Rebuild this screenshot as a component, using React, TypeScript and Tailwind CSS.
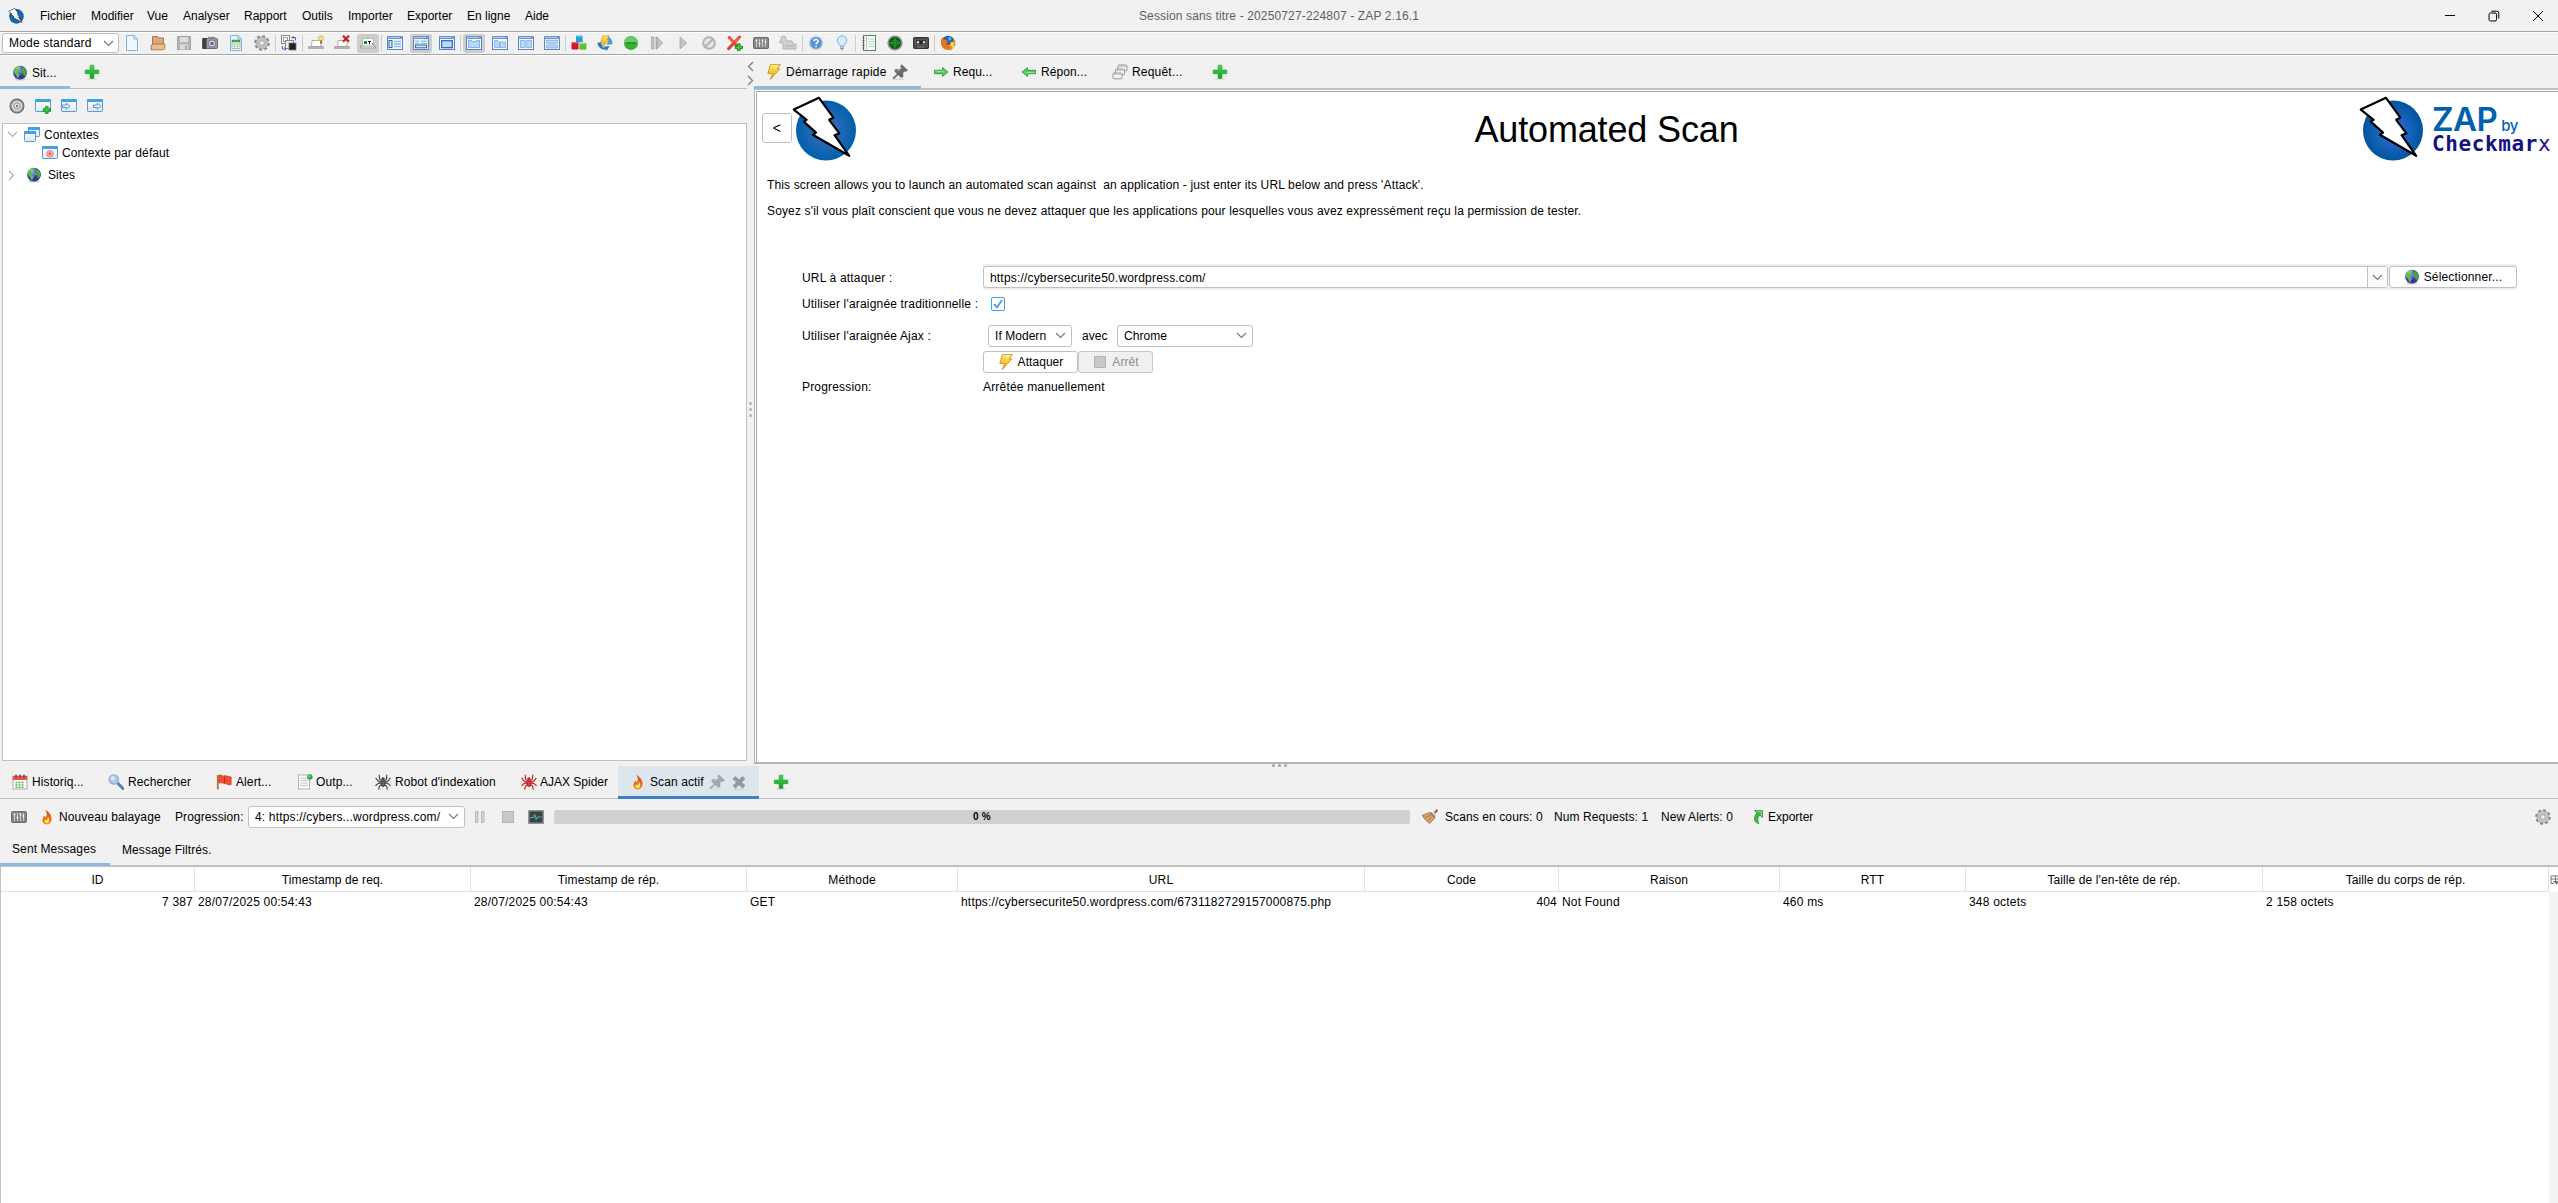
import React from 'react';

type IconProps = { className?: string };
type Kids = { children?: React.ReactNode; className?: string };

function Ico({ children, className = '' }: Kids) {
  return (
    <svg viewBox="0 0 16 16" className={`h-4 w-4 shrink-0 ${className}`} fill="none">
      {children}
    </svg>
  );
}

const Defs = () => (
  <svg className="absolute h-0 w-0" aria-hidden="true">
    <defs>
      <radialGradient id="ball">
        <stop offset="0" stopColor="#4171bb" />
        <stop offset="1" stopColor="#0060ad" />
      </radialGradient>
      <radialGradient id="ball2">
        <stop offset="0" stopColor="#3472e0" />
        <stop offset="1" stopColor="#00559e" />
      </radialGradient>
      <linearGradient id="bolt" x1="0" y1="0" x2="0" y2="1">
        <stop offset="0" stopColor="#ffe96b" />
        <stop offset="1" stopColor="#f0a202" />
      </linearGradient>
      <linearGradient id="win" x1="0" y1="0" x2="0" y2="1">
        <stop offset="0" stopColor="#ffffff" />
        <stop offset="1" stopColor="#dfe7f2" />
      </linearGradient>
      <radialGradient id="globe" cx="0.35" cy="0.3">
        <stop offset="0" stopColor="#a9adf5" />
        <stop offset="1" stopColor="#34349c" />
      </radialGradient>
      <linearGradient id="plus" x1="0" y1="0" x2="0" y2="1">
        <stop offset="0" stopColor="#4fd34f" />
        <stop offset="1" stopColor="#0f9d28" />
      </linearGradient>
      <linearGradient id="flame" x1="0" y1="0" x2="0" y2="1">
        <stop offset="0" stopColor="#d9401a" />
        <stop offset="1" stopColor="#f88a1c" />
      </linearGradient>
    </defs>
  </svg>
);

const ZapLogo = ({ className = '', fill = 'url(#ball)' }: IconProps & { fill?: string }) => (
  <svg viewBox="0 0 64 66" className={`shrink-0 ${className}`}>
    <circle cx="34" cy="34.5" r="30" fill={fill} />
    <path
      d="M27 1.8 L1.8 13.6 L14.6 23.8 L11.8 25.6 L24 36.6 L20.8 38.8 L57.2 59.8 L42.6 39.2 L47.4 37.4 L37.2 23.8 L41.4 21.6 Z"
      fill="#fff"
      stroke="#000"
      strokeWidth="2.2"
      strokeLinejoin="round"
    />
  </svg>
);

const Globe = ({ className = '' }: IconProps) => (
  <Ico className={className}>
    <ellipse cx="8" cy="14.4" rx="5.5" ry="1.1" fill="#c9c9cf" />
    <circle cx="8" cy="7.7" r="6.9" fill="url(#globe)" />
    <path d="M2 4.5C4 1.5 7 .9 9 1.6L7.6 3.7 6 4.2 6.6 6 4.6 7.2 7.6 9.6 6.2 13.6C4.4 12.4 4.6 10 3.2 8.6 1.6 7.6 1.4 6 2 4.5Z" fill="#5cc443" />
    <path d="M9.6 2.6L12.4 3 14.4 6.2 14.2 9.8 12 11.4 11 8.6 9.2 7.6 9.8 5.2Z" fill="#45ab38" />
    <path d="M3.4 4C5 2.2 6.4 2 7.6 2.2L6 3.6Z" fill="#a5e38a" />
  </Ico>
);

const Plus = ({ className = '' }: IconProps) => (
  <Ico className={className}>
    <ellipse cx="8" cy="14.8" rx="5" ry=".9" fill="#d2d2d2" />
    <path d="M6.1 1.2h3.8v4.9h4.9v3.6H9.9v4.6H6.1V9.7H1.2V6.1h4.9Z" fill="url(#plus)" stroke="#18a32e" strokeWidth=".6" />
  </Ico>
);

const Bolt = ({ className = '' }: IconProps) => (
  <Ico className={className}>
    <path d="M4.4 .6h10L11.2 5h2.6L4.200 15.600 6.800 9.600H1.800Z" fill="url(#bolt)" stroke="#c8890e" strokeWidth=".8" strokeLinejoin="round" />
    <path d="M5.2 1.6h6L8.4 5.2" stroke="#fff8c0" strokeWidth=".7" />
  </Ico>
);

const Pin = ({ className = '' }: IconProps) => (
  <Ico className={className}>
    <path d="M6.4 9.6L1 14.8" stroke="#777" strokeWidth="2" />
    <path d="M9.6 .8L15.6 6.2 13.8 7.4 12.2 7.2 10.8 8.8 11 12.8 9 13.4 2.600 7.200 3.600 5.400 7.600 5.600 9.200 4 8.800 2.200Z" fill="#6c6c6c" stroke="#5a5a5a" strokeWidth=".6" />
    <path d="M5.4 7L9.6 3.8" stroke="#b5b5b5" strokeWidth="1.200" />
    <path d="M2 15.2h10" stroke="#cacaca" strokeWidth="1" />
  </Ico>
);

const Arrow = ({ left }: { left?: boolean }) => (
  <Ico className={left ? 'rotate-180' : ''}>
    <path d="M1.5 6.3H9.6V3.6L14.8 8 9.6 12.4V9.7H1.5Z" fill="#5dcb63" stroke="#1f9630" strokeWidth=".9" strokeLinejoin="round" />
    <path d="M2.2 7.3h8.4" stroke="#a5eca2" strokeWidth=".9" />
  </Ico>
);

const Stack = () => (
  <Ico>
    {[[6, 1], [3.5, 5], [1, 9]].map(([x, y]) => (
      <g key={x}>
        <rect x={x} y={y} width="9" height="5.8" rx="1" fill="#f2f2f2" stroke="#8f8f8f" strokeWidth=".9" />
        <path d={`M${x} ${y + 1.1}h9`} stroke="#b9b9b9" strokeWidth="1.2" />
      </g>
    ))}
  </Ico>
);

const Chev = ({ className = '' }: IconProps) => (
  <svg viewBox="0 0 11 7" className={`h-[7px] w-[11px] shrink-0 ${className}`} fill="none">
    <path d="M1 1L5.5 5.5 10 1" stroke="#7a7a7a" strokeWidth="1.2" />
  </svg>
);

/* Window-shaped icon with a blue title strip. */
const Win = ({ children, x = 0, y = 2, w = 16, h = 13 }: { children?: React.ReactNode; x?: number; y?: number; w?: number; h?: number }) => (
  <>
    <rect x={x + 0.5} y={y + 0.5} width={w - 1} height={h - 1} rx=".8" fill="url(#win)" stroke="#5a9bd3" />
    <rect x={x} y={y} width={w} height="3" rx=".8" fill="#3fa2e6" />
    {children}
  </>
);

/* Layout-selector icon frame. */
const Lay = ({ children }: Kids) => (
  <Ico>
    <rect x=".5" y="1.5" width="15" height="13" fill="#f4f8fe" stroke="#5b82be" />
    <rect x="0" y="1" width="16" height="3" fill="#6f95d0" />
    <rect x="1" y="2" width="12" height=".9" fill="#b4cdf0" />
    {children}
  </Ico>
);

const Gear = ({ className = '' }: IconProps) => (
  <Ico className={className}>
    <circle cx="8" cy="8" r="6.6" stroke="#868686" strokeWidth="2.4" strokeDasharray="2.9 2.28" />
    <circle cx="8" cy="8" r="4.4" fill="none" stroke="#c2c2c2" strokeWidth="3.2" />
    <circle cx="8" cy="8" r="6" stroke="#969696" strokeWidth=".6" />
    <circle cx="8" cy="8" r="2.4" fill="#f4f4f4" stroke="#888" strokeWidth=".8" />
  </Ico>
);

const Doc = ({ children }: Kids) => (
  <>
    <path d="M2.5.5H10L13.5 4V15.5H2.5Z" fill="#eef6fe" stroke="#7fb2de" />
    <path d="M10 .5V4h3.5" fill="#cfe4f8" stroke="#7fb2de" />
    {children}
  </>
);

const Mixer = () => (
  <Ico>
    <rect x=".5" y="2.5" width="15" height="11" rx="1" fill="#858585" stroke="#6c6c6c" />
    <path d="M3.5 4v8M6.5 4v8M9.5 4v8M12.5 4v8" stroke="#d5d5d5" strokeWidth=".9" />
    <path d="M2.7 5.500h1.600M5.700 8.500h1.600M8.700 5.500h1.600M11.700 7h1.600" stroke="#fff" strokeWidth="1.4" />
  </Ico>
);

const Stop = () => (
  <Ico>
    <rect x="2.5" y="2.5" width="11" height="11" fill="#c9c9c9" stroke="#b4b4b4" />
  </Ico>
);

const Flame = ({ className = '' }: IconProps) => (
  <Ico className={className}>
    <path d="M6 .6C10 3 12.8 6.4 12.6 10.2 12.4 13.4 10.4 15.4 7.8 15.4 5 15.4 3.2 13.4 3.4 10.8 3.6 9 4.8 8.4 5 6.8 6 7.2 6.4 8 6.4 8.8 8.6 6.4 8 3 6 .6Z" fill="url(#flame)" />
    <path d="M8.8 7.6C10.4 9.2 10.6 12 9.6 13.4 8.6 14.6 6.6 14.4 5.8 13.2 5.2 12 5.6 11 6 10.4 6.4 11.2 7 11.4 7.6 11 8.6 10 8.9 8.8 8.8 7.6Z" fill="#ffe75a" />
  </Ico>
);

const Spider = ({ c }: { c: string }) => (
  <Ico>
    <ellipse cx="8" cy="9.6" rx="2.4" ry="3.4" fill={c} />
    <circle cx="8" cy="5" r="1.8" fill={c} />
    <path d="M7 7L4.6 5.4 4.2 .8M9 7L11.4 5.4 11.8 .8M6.4 8L3.4 7.4 .6 3.800M9.6 8L12.6 7.4 15.400 3.800M6.2 9.2L3.4 9.4 .4 11.8M9.8 9.2L12.6 9.4 15.6 11.8M6.6 10.6L4.4 12 3.600 15.600M9.4 10.6L11.6 12 12.400 15.600" stroke={c} strokeWidth="1.2" />
    <path d="M7.2 9h1.6M7.2 11h1.6" stroke="#fff" strokeWidth=".5" opacity=".6" />
  </Ico>
);

const Laptop = ({ children }: Kids) => (
  <Ico>
    <path d="M4 5.5h9v6H3.5Z" fill="#fdfdfd" stroke="#9c9c9c" strokeWidth=".8" />
    <path d="M.6 11.6h14.8v1.8H.6Z" fill="#bdbdbd" stroke="#8a8a8a" strokeWidth=".6" />
    {children}
  </Ico>
);

const Cell = ({ children, on, className = 'w-[26px]' }: Kids & { on?: boolean }) => (
  <div className={`flex shrink-0 justify-center ${className}`}>
    <div className={`flex h-[19px] w-[22px] items-center justify-center rounded-[3px] ${on ? 'bg-[#cdcdcd]' : ''}`}>{children}</div>
  </div>
);
const Sep = () => <div className="h-[17px] w-px shrink-0 bg-[#cdcdcd]" />;

const TitleBar = () => (
  <div className="relative flex h-[31px] items-center">
    <div className="w-[40px] pl-2">
      <ZapLogo className="h-4 w-4" />
    </div>
    <div className="flex tracking-normal">
      <div className="w-[51px]">Fichier</div>
      <div className="w-[56px]">Modifier</div>
      <div className="w-[36px]">Vue</div>
      <div className="w-[61px]">Analyser</div>
      <div className="w-[58px]">Rapport</div>
      <div className="w-[46px]">Outils</div>
      <div className="w-[59px]">Importer</div>
      <div className="w-[60px]">Exporter</div>
      <div className="w-[58px]">En ligne</div>
      <div>Aide</div>
    </div>
    <div className="pointer-events-none absolute inset-0 flex items-center justify-center text-[#5f5f5f]">
      <span className="tracking-[0.14px]">Session sans titre - 20250727-224807 - ZAP 2.16.1</span>
    </div>
    <div className="ml-auto flex items-center pr-[14px]">
      <svg viewBox="0 0 12 12" className="mr-[32px] h-3 w-3"><path d="M1 5.5h10" stroke="#000" /></svg>
      <svg viewBox="0 0 12 12" className="mr-[32px] h-3 w-3" fill="none">
        <rect x="1" y="3" width="7.6" height="8" rx="1.6" stroke="#000" />
        <path d="M3.4 1.2H8.6A2.2 2.2 0 0 1 10.8 3.4V8.6" stroke="#000" />
      </svg>
      <svg viewBox="0 0 12 12" className="h-3 w-3"><path d="M1 1l10 10M11 1L1 11" stroke="#000" /></svg>
    </div>
  </div>
);

const Toolbar = () => (
  <div className="flex h-[24px] items-center border-y border-t-[#a5a5a5] border-b-[#a5a5a5] pl-[2px] shadow-[inset_0_1px_0_#fff]">
    <div className="flex h-[20px] w-[117px] items-center justify-between rounded-[3px] border border-[#bdbdbd] bg-white pr-1 pl-[6px]">
      <span className="tracking-[0.2px]">Mode standard</span>
      <Chev />
    </div>
    <Cell><Ico><Doc /></Ico></Cell>
    <Cell>
      <Ico>
        <path d="M2.5 1.5h5l1 1.5h5v10h-11Z" fill="#d9a878" stroke="#a9774a" />
        <path d="M1 10.5L3 9H14.8V13.6L13.6 14.8H1Z" fill="#e9bd90" stroke="#a9774a" strokeWidth=".9" />
      </Ico>
    </Cell>
    <Cell>
      <Ico>
        <path d="M1.5 1.5h13v13h-13Z" fill="#b5b5b5" stroke="#a2a2a2" />
        <rect x="4" y="2" width="8" height="5" fill="#dedede" />
        <rect x="4" y="9.5" width="8" height="5" fill="#dedede" />
        <rect x="9" y="10.5" width="2" height="4" fill="#a9a9a9" />
      </Ico>
    </Cell>
    <Cell>
      <Ico>
        <rect x=".5" y="3.5" width="15" height="10" rx="1" fill="#9b9b9b" stroke="#6c6c6c" />
        <rect x=".5" y="3" width="4" height="11" fill="#3e3e3e" />
        <rect x="6" y="1.8" width="7" height="2" fill="#8b8b8b" />
        <circle cx="10" cy="8.5" r="3.6" fill="#dcdce6" stroke="#5e5e6e" strokeWidth=".8" />
        <circle cx="10" cy="8.5" r="1.8" fill="#5a5f9d" />
      </Ico>
    </Cell>
    <Cell>
      <Ico>
        <Doc>
          <rect x="4" y="5" width="8" height="8.5" fill="#fff" stroke="#7d9a7d" strokeWidth=".6" />
          <rect x="4" y="5" width="8" height="2.2" fill="#2fa33b" />
          <path d="M4 9h8M4 11.2h8M6.7 5v8.5M9.4 5v8.5" stroke="#8db48d" strokeWidth=".6" />
        </Doc>
      </Ico>
    </Cell>
    <Cell><Gear /></Cell>
    <Sep />
    <Cell>
      <Ico>
        <rect x=".5" y=".5" width="8" height="8" fill="#fff" stroke="#8a8a8a" />
        <rect x="2.5" y="2.5" width="4" height="4" stroke="#8a8a8a" strokeWidth=".8" />
        <rect x="4.5" y="5.5" width="8" height="8" fill="#eee" stroke="#8a8a8a" />
        <rect x="8" y="8" width="7" height="7" fill="#222" stroke="#777" strokeWidth=".8" />
        <path d="M11 2.5h3.5V5.5M11 2.5l1.5-1.5M11 2.5L12.5 4M5 14H1.4V11M5 14l-1.5-1.5M5 14l-1.5 1.5" stroke="#2f55c8" strokeWidth=".9" />
      </Ico>
    </Cell>
    <Sep />
    <Cell>
      <Laptop>
        <circle cx="13" cy="3.4" r="2.6" fill="#f6e07a" stroke="#bfa33e" strokeWidth=".6" />
        <rect x="12" y="5.6" width="2" height="3" fill="#8a7b4a" />
      </Laptop>
    </Cell>
    <Cell>
      <Laptop>
        <path d="M9 .8l6 6M15 .8l-6 6" stroke="#cc1f1f" strokeWidth="2.2" />
      </Laptop>
    </Cell>
    <Cell on>
      <Ico>
        <path d="M2.5 3.5h11v8h-11Z" fill="#fff" stroke="#a9a9a9" strokeWidth=".8" />
        <path d="M.6 11h14.8v2H.6Z" fill="#e9e9e9" stroke="#7d7d7d" strokeWidth=".6" />
        <rect x="4" y="6" width="3" height="3" fill="#07931c" />
        <path d="M8 6.5h3M9.5 6.5V9.4M12 9h1" stroke="#111" strokeWidth="1" />
      </Ico>
    </Cell>
    <Sep />
    <Cell>
      <Lay>
        <rect x="2" y="5.5" width="3" height="7" fill="#d4e6fb" stroke="#2d64b0" />
        <path d="M7 6.5h7M7 9h7M7 11.5h7" stroke="#8db8e8" strokeWidth="1.4" />
      </Lay>
    </Cell>
    <Cell on>
      <Lay>
        <path d="M2 6.2h4M7.5 6.2h6.5M2 8.4h4M7.5 8.4h6.5" stroke="#8db8e8" strokeWidth="1.3" />
        <rect x="2.5" y="10" width="11" height="2.8" fill="#d4e6fb" stroke="#2d64b0" />
      </Lay>
    </Cell>
    <Cell>
      <Lay><rect x="2.7" y="5.7" width="10.6" height="7" fill="#bedaf8" stroke="#2d64b0" strokeWidth="1.2" /></Lay>
    </Cell>
    <Sep />
    <Cell on>
      <Lay><path d="M2.5 12.5v-7h3v1h5v-1h3v7Z" fill="#bcd8f7" stroke="#7fb0e6" /></Lay>
    </Cell>
    <Cell>
      <Lay><path d="M2.5 12.5v-7h3v1.5h2v5.5Z M8 12.5v-5.5h5.5v5.5Z" fill="#bcd8f7" stroke="#7fb0e6" strokeWidth=".9" /></Lay>
    </Cell>
    <Cell>
      <Lay><path d="M2.5 5.5h4.7v7H2.5Z M8.8 5.5h4.7v7H8.8Z" fill="#bcd8f7" stroke="#7fb0e6" strokeWidth=".9" /></Lay>
    </Cell>
    <Cell>
      <Lay><path d="M2.5 5.3h11v2.9h-11Z M2.5 10h11v2.9h-11Z" fill="#bcd8f7" stroke="#7fb0e6" strokeWidth=".9" /></Lay>
    </Cell>
    <Sep />
    <Cell>
      <Ico>
        <rect x="5" y=".6" width="6.6" height="6.6" rx=".8" fill="#22a0dc" />
        <rect x=".5" y="7" width="7" height="7.6" rx=".8" fill="#d4152a" />
        <rect x="8.4" y="7.8" width="7" height="7" rx=".8" fill="#5cc234" />
        <path d="M5.5 1.2h5.4M1 7.8h5.8M9 8.5h5.8" stroke="#fff" strokeWidth=".9" opacity=".5" />
      </Ico>
    </Cell>
    <Cell>
      <Ico>
        <path d="M.6 7.500c0 4.500 3.600 7.400 8 7l1 1.300 3-4.600-5.800.4 1 1.200C6 12.600 4.400 11 4.400 7.500Z" fill="#1f78c4" />
        <path d="M15.600 9c0-4-2.200-7.400-6.600-8L11 6l-1 4Z" fill="#4b9cdc" />
        <path d="M6 .8h6L10 4.8h2.6L4.8 12.6 6.6 7.6H3.4Z" fill="url(#bolt)" stroke="#c8890e" strokeWidth=".6" />
      </Ico>
    </Cell>
    <Cell>
      <Ico>
        <circle cx="8" cy="8" r="7" fill="#35b234" />
        <path d="M1.5 7.6a6.5 6.3 0 0 1 13 0Z" fill="#6ccb66" />
        <path d="M3 8h10" stroke="#22862a" strokeWidth="1.4" />
      </Ico>
    </Cell>
    <Cell>
      <Ico><path d="M2.500 2h2.400v12H2.500ZM7 2h1v12H7ZM8 2l5.600 6L8 14Z" fill="#c4c4c4" stroke="#a6a6a6" strokeWidth=".8" /></Ico>
    </Cell>
    <Cell><Ico><path d="M5 2l6.8 6L5 14Z" fill="#c4c4c4" stroke="#a6a6a6" strokeWidth=".8" /></Ico></Cell>
    <Cell>
      <Ico><circle cx="8" cy="8" r="5.8" stroke="#b2b2b2" strokeWidth="2" fill="#e6e6e6" /><path d="M4 12L12 4" stroke="#b2b2b2" strokeWidth="2" /></Ico>
    </Cell>
    <Cell>
      <Ico>
        <path d="M2.200 2.600l10 11M12.600 2l-11 11.600" stroke="#e0432f" strokeWidth="3" strokeLinecap="round" />
        <path d="M2.400 2.800l4 4.400M12.400 2.200l-4.400 4.700" stroke="#f79080" strokeWidth="1" />
        <path d="M10.500 8.800h2.600v2.400h2.400v2.400h-2.400v2.200h-2.600v-2.200H8.200v-2.400h2.300Z" fill="#3bd23b" stroke="#0a7d16" strokeWidth=".8" />
      </Ico>
    </Cell>
    <Cell><Mixer /></Cell>
    <Cell className="w-[28px]">
      <Ico className="!w-[18px]">
        <path d="M1 6V3.500a2.500 2.500 0 0 1 5 0V6h6l1 3h3v5H3V8H0V6Z" fill="#d0d0d0" stroke="#aeaeae" strokeWidth=".9" />
        <path d="M5 11h9" stroke="#aeaeae" strokeWidth="1" />
      </Ico>
    </Cell>
    <Sep />
    <Cell>
      <Ico>
        <circle cx="8" cy="8" r="6.800" fill="#5a8fd0" stroke="#d4e0ef" />
        <circle cx="8" cy="8" r="6" stroke="#a8c5e8" strokeWidth=".8" />
        <path d="M5.900 6.200C6 4 10.300 4 10.200 6.300 10.200 7.700 8.200 7.700 8.100 9.400M8.100 10.800v1.500" stroke="#fff" strokeWidth="1.500" />
      </Ico>
    </Cell>
    <Cell>
      <Ico>
        <path d="M8 .8a4.600 4.600 0 0 1 2.800 8.300L10 11H6L5.200 9.100A4.600 4.600 0 0 1 8 .8Z" fill="#d6ebff" stroke="#7db4ea" />
        <path d="M6 12h4M6.200 13.500h3.600M7 15h2" stroke="#8f8f8f" strokeWidth="1.100" />
      </Ico>
    </Cell>
    <Sep />
    <Cell>
      <Ico>
        <rect x="2.500" y=".5" width="12" height="15" fill="#f7fcf7" stroke="#5f7d6b" />
        <path d="M5.500 1v14" stroke="#9cb9a8" strokeWidth=".7" />
        <path d="M1.500 3h2M1.500 5.500h2M1.500 8h2M1.500 10.500h2M1.500 13h2" stroke="#555" strokeWidth="1" />
        <path d="M7 4h6M7 6.500h6M7 9h6M7 11.500h6" stroke="#a9d2b2" strokeWidth=".8" />
      </Ico>
    </Cell>
    <Cell>
      <Ico>
        <circle cx="8" cy="8" r="6.800" fill="#0d5c17" stroke="#8d8d8d" strokeWidth="1.600" />
        <path d="M8 2.500v11M2.500 8h11" stroke="#2fae3c" strokeWidth=".9" />
        <circle cx="8" cy="8" r="3" stroke="#2fae3c" strokeWidth=".6" />
      </Ico>
    </Cell>
    <Cell>
      <Ico>
        <rect x=".5" y="2.500" width="15" height="11" rx=".8" fill="#4a4a4a" stroke="#333" />
        <rect x="2.500" y="5" width="11" height="4.600" fill="#222" stroke="#888" strokeWidth=".5" />
        <circle cx="5" cy="7.300" r="1.200" fill="#ddd" /><circle cx="11" cy="7.300" r="1.200" fill="#ddd" />
        <path d="M4 12h8" stroke="#888" strokeWidth=".8" />
      </Ico>
    </Cell>
    <Sep />
    <Cell>
      <Ico>
        <circle cx="8" cy="7.600" r="6.800" fill="#2a62ae" />
        <path d="M8.500 2a4 4 0 0 1 3 2L9 6Z" fill="#7dc2ee" />
        <path d="M1 4.500L2.500 2.500 3 4 6 5 8 7 6 8.500 8.500 10 12 9.500 13.500 5 13 2.500 15.200 6.500C15.600 11 12.500 15 8 15 3.500 15 .4 11.500 1 4.500Z" fill="#e8761a" />
        <path d="M11 7h4l-1.500 3h2L10.500 15.500 12 11.500H9.500Z" fill="#ffd94a" stroke="#c8890e" strokeWidth=".5" />
      </Ico>
    </Cell>
  </div>
);

const SitesPanel = () => (
  <div className="flex w-[747px] shrink-0 flex-col">
    <div className="flex h-[33px] border-b border-[#c0c0c0]">
      <div className="-mb-px flex w-[70px] items-center border-b-[3px] border-[#92b8de] pt-[3px] pl-3">
        <Globe /><span className="ml-1">Sit...</span>
      </div>
      <div className="flex items-center pl-[14px]"><Plus /></div>
    </div>
    <div className="flex h-[34px] items-center gap-[10px] pl-[9px]">
      <Ico>
        <circle cx="8" cy="8" r="6.900" fill="#a9a9a9" stroke="#666" strokeWidth="1.200" />
        <circle cx="8" cy="8" r="4.300" stroke="#eee" strokeWidth="1.100" />
        <circle cx="8" cy="8" r="1.800" stroke="#eee" strokeWidth="1.100" fill="#777" />
      </Ico>
      <Ico><Win y={1}><path d="M10.500 8.500h2.600v2.200h2.400v2.500h-2.400v2.300h-2.600v-2.300H8.200v-2.500h2.300Z" fill="#3bc63b" stroke="#0a8a1e" strokeWidth=".8" /></Win></Ico>
      <Ico><Win y={1}><path d="M1.500 7h3.800V5.200L9 8.200 5.300 11.200V9.500H1.500Z" fill="#f4faff" stroke="#4c93cf" /></Win></Ico>
      <Ico><Win y={1}><path d="M6.500 7h3.800V5.200L14 8.200l-3.700 3V9.500H6.500Z" fill="#f4faff" stroke="#4c93cf" /></Win></Ico>
    </div>
    <div className="ml-[2px] flex-1 border border-[#c0c0c0] bg-white pt-px">
      <div className="flex h-[19px] items-center pl-[4px]">
        <Chev className="opacity-60" />
        <Ico className="ml-[6px]"><Win x={4} y={0} w={12} h={10} /><Win x={0} y={4} w={12} h={11} /></Ico>
        <span className="ml-1">Contextes</span>
      </div>
      <div className="flex h-[17px] items-center pl-[39px]">
        <Ico>
          <Win y={1}><circle cx="8" cy="8.800" r="3.300" fill="#f9b4b0" stroke="#f07874" /><circle cx="8" cy="8.800" r="1.200" fill="#e8504c" /></Win>
        </Ico>
        <span className="ml-1">Contexte par défaut</span>
      </div>
      <div className="flex h-[27px] items-center pt-px pl-[3px]">
        <Chev className="-rotate-90 opacity-60" />
        <Globe className="ml-[9px]" />
        <span className="ml-[6px]">Sites</span>
      </div>
    </div>
  </div>
);

const Splitter = () => (
  <div className="flex w-[7px] shrink-0 flex-col items-center pt-[5px]">
    <Chev className="mt-[2px] rotate-90" />
    <Chev className="mt-[7px] -rotate-90" />
    <div className="mt-[318px] flex flex-col gap-[3px]">
      <i className="block h-[3px] w-[3px] rounded-full bg-[#b0b0b0]" />
      <i className="block h-[3px] w-[3px] rounded-full bg-[#b0b0b0]" />
      <i className="block h-[3px] w-[3px] rounded-full bg-[#b0b0b0]" />
    </div>
  </div>
);

const Combo = ({ children, className = '' }: Kids) => (
  <div className={`flex h-[22px] items-center justify-between rounded-[3px] border border-[#c0c0c0] bg-white pr-[5px] pl-[6px] ${className}`}>
    {children}
    <Chev />
  </div>
);

const QuickStart = () => (
  <div className="flex min-w-0 flex-1 flex-col">
    <div className="flex h-[34px] border-b-2 border-[#c0c0c0]">
      <div className="-mb-px flex w-[167px] items-center border-b-[3px] border-[#92b8de] pt-[2px] pl-3">
        <Bolt /><span className="ml-1 w-[102px] tracking-[0.25px]">Démarrage rapide</span><Pin className="ml-[4px]" />
      </div>
      <div className="flex w-[88px] items-center pl-3"><Arrow /><span className="ml-1">Requ...</span></div>
      <div className="flex w-[91px] items-center pl-3"><Arrow left /><span className="ml-1">Répon...</span></div>
      <div className="flex w-[98px] items-center pl-3"><Stack /><span className="ml-1 tracking-[0.2px]">Requêt...</span></div>
      <div className="flex items-center pl-[14px]"><Plus /></div>
    </div>
    <div className="flex flex-1 flex-col border-b-2 border-l border-[#b4b4b4] bg-white pt-px pl-px">
      <div className="flex flex-1 flex-col border-t border-l border-[#a9a9a9]">
        <div className="relative flex h-[75px] items-center pl-[5px]">
          <div className="-mt-[3px] flex h-[30px] w-[30px] items-center justify-center rounded-[3px] border border-[#c0c0c0] text-[14px]">&lt;</div>
          <ZapLogo className="-mt-[2px] h-[66px] w-[64px]" />
          <div className="pointer-events-none absolute inset-x-0 top-[17px] text-center text-[36px] leading-[42px]">
            <span className="relative left-[-51px] tracking-[-0.15px]">Automated Scan</span>
          </div>
          <div className="mr-[4px] ml-auto flex items-center">
            <ZapLogo className="-mt-[2px] h-[66px] w-[64px]" fill="url(#ball2)" />
            <div className="ml-[9px] w-[122px]">
              <div className="flex h-[28px] items-baseline text-[#0062ad]">
                <span className="font-[Inter] text-[33px] leading-[28px] font-semibold tracking-[-0.5px]">ZAP</span>
                <span className="ml-[4px] font-[Inter] text-[15px] leading-[14px] font-medium tracking-[-0.5px]">by</span>
              </div>
              <div className="mt-px flex h-[20px] items-baseline font-['DejaVu_Sans_Mono'] text-[21px] leading-[20px] text-[#171283]">
                <span className="font-bold tracking-[0.6px]">Checkmar</span><span className="tracking-normal">x</span>
              </div>
            </div>
          </div>
        </div>
        <div className="mt-[3px] flex h-[30px] items-center pl-[10px] tracking-[0.145px] whitespace-pre">This screen allows you to launch an automated scan against  an application - just enter its URL below and press 'Attack'.</div>
        <div className="flex h-[21px] items-center pl-[10px] tracking-[0.145px]">Soyez s'il vous plaît conscient que vous ne devez attaquer que les applications pour lesquelles vous avez expressément reçu la permission de tester.</div>
        <div className="mt-[43px] ml-[45px] grid grid-cols-[181px_1534px] grid-rows-[26px_28px_35px_22px_30px] items-center tracking-[0.18px]">
          <span className="pt-px">URL à attaquer :</span>
          <div className="flex h-[26px] items-center gap-px bg-[#f0f0f0]">
            <div className="flex h-[22px] w-[1405px] items-center rounded-[3px] border border-[#c0c0c0] bg-white">
              <span className="flex-1 pt-px pl-[6px]">https://cybersecurite50.wordpress.com/</span>
              <div className="flex h-full w-[20px] items-center justify-center border-l border-[#c0c0c0] bg-[#fafafa]"><Chev /></div>
            </div>
            <div className="flex h-[22px] w-[128px] items-center justify-center gap-1 rounded-[3px] border border-[#c0c0c0] bg-white"><Globe /><span>Sélectionner...</span></div>
          </div>
          <span>Utiliser l'araignée traditionnelle :</span>
          <div className="ml-[8px] flex h-[14px] w-[14px] items-center justify-center rounded-[2px] border border-[#4a9ae6] bg-white">
            <svg viewBox="0 0 12 12" className="h-3 w-3" fill="none"><path d="M2 6l3 3.400L10 2" stroke="#4496e6" strokeWidth="1.800" /></svg>
          </div>
          <span>Utiliser l'araignée Ajax :</span>
          <div className="flex items-center tracking-[0.05px]">
            <Combo className="ml-[5px] w-[84px]">If Modern</Combo>
            <span className="ml-[10px] w-[35px]">avec</span>
            <Combo className="w-[136px]">Chrome</Combo>
          </div>
          <span />
          <div className="-mt-[4px] flex tracking-[0.05px]">
            <div className="flex h-[22px] w-[95px] items-center justify-center gap-1 rounded-[3px] border border-[#c0c0c0] bg-white"><Bolt /><span>Attaquer</span></div>
            <div className="flex h-[22px] w-[75px] items-center justify-center gap-1 rounded-[3px] border border-[#c8c8c8] bg-[#f0f0f0] text-[#8f8f8f]"><Stop /><span>Arrêt</span></div>
          </div>
          <span className="-mt-[6px]">Progression:</span>
          <span className="-mt-[6px]">Arrêtée manuellement</span>
        </div>
      </div>
    </div>
  </div>
);

const BottomTabs = () => (
  <div className="flex h-[33px] items-center border-b border-[#c0c0c0]">
    <div className="flex w-[96px] items-center pl-3">
      <Ico>
        <rect x="1" y="2" width="14" height="13" fill="#fdfdfd" stroke="#999" strokeWidth=".8" />
        <rect x=".8" y="2" width="14.400" height="4" fill="#e0554e" />
        <path d="M4 .5v3M8 .5v3M12 .5v3" stroke="#8a1d1a" strokeWidth="1.200" />
        <path d="M3.500 8.500h9M3.500 11h9M3.500 13.300h9" stroke="#5ab05a" strokeWidth="1.500" strokeDasharray="2 1" />
      </Ico>
      <span className="ml-1">Historiq...</span>
    </div>
    <div className="flex w-[108px] items-center pl-3">
      <Ico>
        <path d="M10 9.500l5 5" stroke="#4f7fb5" strokeWidth="3" strokeLinecap="round" />
        <path d="M9 8.800l1.800 1.600" stroke="#888" strokeWidth="1.600" />
        <circle cx="5.800" cy="5.500" r="4.600" fill="#a5cdf8" stroke="#a7a7b5" strokeWidth="1.300" />
        <circle cx="4.800" cy="4.200" r="2" fill="#dcedff" />
      </Ico>
      <span className="ml-1">Rechercher</span>
    </div>
    <div className="flex w-[81px] items-center pl-3">
      <Ico>
        <path d="M1.800 1v14.500" stroke="#a9743f" strokeWidth="1.800" />
        <path d="M2.800 1.200C5 .2 6.500 2 8.500 2.500V1.500L15.200 3V10.500C13 11.500 11 10 8.500 9.500 6.500 9 5 8.500 2.800 9.200Z" fill="#ee5034" stroke="#cb3019" strokeWidth=".6" />
        <path d="M8.500 2.500v7" stroke="#b6230f" strokeWidth=".8" />
      </Ico>
      <span className="ml-1">Alert...</span>
    </div>
    <div className="flex w-[78px] items-center pl-3">
      <Ico>
        <rect x="1.500" y="1" width="11" height="14" fill="#fbfbfb" stroke="#aaa" strokeWidth=".9" />
        <path d="M3.500 4h6M3.500 6.500h7M3.500 9h7M3.500 11.500h7" stroke="#bababa" strokeWidth=".9" />
        <circle cx="12.800" cy="3" r="2.800" fill="#2fae46" />
        <circle cx="12.200" cy="2.300" r="1" fill="#98e09f" />
      </Ico>
      <span className="ml-[3px]">Outp...</span>
    </div>
    <div className="flex w-[146px] items-center pl-3"><Spider c="#4c4c4c" /><span className="ml-1">Robot d'indexation</span></div>
    <div className="flex w-[109px] items-center pl-3"><Spider c="#c4282c" /><span className="ml-[3px] tracking-normal">AJAX Spider</span></div>
    <div className="relative flex h-[33px] w-[141px] items-center self-start border-b-[3px] border-[#3d80c5] bg-[#dde5ed] pt-[2px] pl-3">
      <Flame /><span className="ml-1 w-[54px]">Scan actif</span>
      <Pin className="ml-[5px] opacity-50" />
      <Ico className="ml-[6px]">
        <path d="M3 3.500l10 9.500M13 3.500L3 13" stroke="#999" strokeWidth="4" />
        <path d="M3 15.300h10" stroke="#c9cfd6" />
      </Ico>
    </div>
    <div className="pl-[14px]"><Plus /></div>
  </div>
);

const ScanBar = () => (
  <div className="flex h-[35px] items-center">
    <div className="w-[39px] pl-[11px]"><Mixer /></div>
    <Flame />
    <span className="ml-[4px] w-[116px]">Nouveau balayage</span>
    <span className="w-[73px]">Progression:</span>
    <Combo className="w-[217px] tracking-[0.17px]">4: https://cybers...wordpress.com/</Combo>
    <Ico className="ml-[7px]"><path d="M3.500 2.500h2.500v11H3.500ZM9.500 2.500h2.500v11H9.500Z" fill="#d6d6d6" stroke="#b8b8b8" /></Ico>
    <span className="ml-[12px]"><Stop /></span>
    <Ico className="ml-[12px]">
      <rect x=".8" y="1.800" width="14.400" height="12.400" fill="#3f4148" stroke="#8e8e8e" strokeWidth="1.400" />
      <path d="M2.500 8.500h3l1.200-3 1.600 5 1.200-2.500h4" stroke="#3fdcb2" strokeWidth=".9" />
    </Ico>
    <div className="ml-[10px] flex h-[14px] w-[856px] items-center justify-center rounded-[2px] bg-[#d0d0d0] text-[10px] leading-none font-semibold tracking-[0.3px]">0 %</div>
    <Ico className="ml-[12px]">
      <path d="M12.500 4L15.500 .8" stroke="#a85a3c" strokeWidth="2" />
      <path d="M9 3l4.500 4-1.800 2L7.500 4.800Z" fill="#9a9a9a" stroke="#777" strokeWidth=".5" />
      <path d="M7.500 3.500L13 9 7.500 14.500C5 12.500 2 10 .3 6.200Z" fill="#d3a36c" stroke="#8f6434" strokeWidth=".7" />
      <path d="M3 8.500L9 6M5.500 12L10 7.500" stroke="#8f6434" strokeWidth=".6" />
    </Ico>
    <span className="ml-[7px] w-[109px]">Scans en cours: 0</span>
    <span className="w-[107px]">Num Requests: 1</span>
    <span className="w-[88px]">New Alerts: 0</span>
    <Ico>
      <path d="M5.500 1.500h8v7l-2.600-2.300C8.500 8 8.300 11 9.800 14.800 4.800 13.500 4 8 8 4Z" fill="#3fb84a" stroke="#1c8a2c" strokeWidth=".7" />
      <path d="M7.500 2.300h5v4.500" stroke="#a0eaa0" strokeWidth=".8" />
    </Ico>
    <span className="ml-[3px] tracking-normal">Exporter</span>
    <Gear className="mr-[7px] ml-auto" />
  </div>
);

const headers = ['ID', 'Timestamp de req.', 'Timestamp de rép.', 'Méthode', 'URL', 'Code', 'Raison', 'RTT', "Taille de l'en-tête de rép.", 'Taille du corps de rép.'];
const row = ['7 387', '28/07/2025 00:54:43', '28/07/2025 00:54:43', 'GET', 'https://cybersecurite50.wordpress.com/6731182729157000875.php', '404', 'Not Found', '460 ms', '348 octets', '2 158 octets'];
const cols = 'grid grid-cols-[194px_276px_276px_211px_407px_194px_221px_186px_297px_286px]';

const Table = () => (
  <div className="flex flex-1 border-t-2 border-l border-[#c0c0c0] bg-white">
    <div className="w-[2548px]">
      <div className={`${cols} h-[25px] border-b border-[#e2e2e2]`}>
        {headers.map((h) => (
          <div key={h} className="flex items-center justify-center border-r border-[#e2e2e2] pt-px">{h}</div>
        ))}
      </div>
      <div className={`${cols} h-[20px] tracking-[0.2px]`}>
        {row.map((c, i) => (
          <div key={i} className={`flex items-center ${i === 0 || i === 5 ? 'justify-end pr-[2px]' : 'pl-[3px]'}`}>{c}</div>
        ))}
      </div>
    </div>
    <div className="flex flex-1 flex-col">
      <div className="flex h-[25px] items-center overflow-hidden">
        <svg viewBox="0 0 11 10" className="ml-px h-[10px] w-[11px] shrink-0" fill="none">
          <path d="M1 1h9M1 4h9M1 1v7.500h3M5.500 1v5M10 1v4" stroke="#777" />
          <path d="M3 6h7L6.500 9.500Z" fill="#777" />
        </svg>
      </div>
      <div className="flex-1 bg-[#f3f3f3]" />
    </div>
  </div>
);

export default function App() {
  return (
    <div className="relative flex h-[1203px] w-[2558px] flex-col overflow-hidden bg-[#f1f1f1] font-['Liberation_Sans',Arial,sans-serif] text-[12px] leading-[14px] tracking-[0.1px] whitespace-nowrap text-black">
      <Defs />
      <TitleBar />
      <Toolbar />
      <div className="h-px bg-white" />
      <div className="flex h-[708px]">
        <div className="flex pb-[3px]"><SitesPanel /></div>
        <Splitter />
        <QuickStart />
      </div>
      <div className="flex h-[2px] items-center justify-center gap-[3px]">
        <i className="block h-[3px] w-[3px] rounded-full bg-[#a5a5a5]" />
        <i className="block h-[3px] w-[3px] rounded-full bg-[#a5a5a5]" />
        <i className="block h-[3px] w-[3px] rounded-full bg-[#a5a5a5]" />
      </div>
      <BottomTabs />
      <ScanBar />
      <div className="flex h-[31px]">
        <div className="relative z-10 -mb-px flex w-[110px] items-center border-b-[3px] border-[#92b8de] pt-px pl-3">Sent Messages</div>
        <div className="flex items-center pl-3">Message Filtrés.</div>
      </div>
      <Table />
    </div>
  );
}
